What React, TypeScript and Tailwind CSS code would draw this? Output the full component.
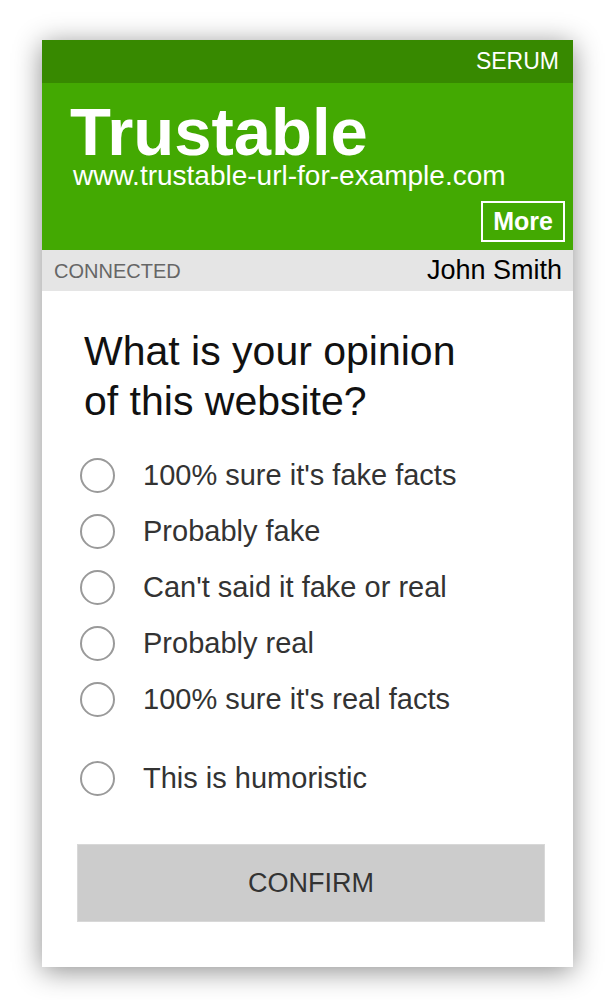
const options = [
  "100% sure it's fake facts",
  'Probably fake',
  "Can't said it fake or real",
  'Probably real',
  "100% sure it's real facts",
];

function Option({ label }: { label: string }) {
  return (
    <div className="flex h-[56px] items-center">
      <span className="ml-[38px] h-[35px] w-[35px] shrink-0 rounded-full border-2 border-[#9a9a9a]" />
      <span className="ml-[28px] text-[29px] leading-none text-[#333]">{label}</span>
    </div>
  );
}

export default function App() {
  const font = { fontFamily: '"Liberation Sans", Arial, Helvetica, sans-serif' };
  return (
    <div className="min-h-[1000px] bg-white pt-[40px]" style={font}>
      <div className="ml-[42px] flex h-[927px] w-[531px] flex-col bg-white shadow-[0_4px_26px_rgba(0,0,0,0.45)]">
        <div className="flex h-[43px] items-center justify-end bg-[#378900] pr-[14px]">
          <span className="text-[23px] leading-none text-white">SERUM</span>
        </div>
        <div className="flex h-[167px] flex-col bg-[#43a902] pl-[28px] pr-[8px] pt-[21px] pb-[8px]">
          <h1 className="h-[56px] text-[67px] font-bold leading-[56px] text-white">Trustable</h1>
          <p className="ml-[3px] mt-[4px] h-[24px] text-[28px] leading-[24px] text-white">www.trustable-url-for-example.com</p>
          <button className="mt-auto flex h-[41px] w-[84px] items-center justify-center self-end border-2 border-white text-[25px] font-bold leading-none text-white">
            More
          </button>
        </div>
        <div className="flex h-[41px] items-center justify-between bg-[#e5e5e5] pl-[12px] pr-[11px]">
          <span className="text-[20px] leading-none text-[#666]">CONNECTED</span>
          <span className="text-[27px] leading-none text-black">John Smith</span>
        </div>
        <div className="flex flex-col pt-[35px]">
          <h2 className="ml-[42px] text-[41px] leading-[50px] text-[#111]">
            What is your opinion
            <br />
            of this website?
          </h2>
          <div className="mt-[21px] flex flex-col">
            {options.map((o) => (
              <Option key={o} label={o} />
            ))}
            <div className="mt-[23px]">
              <Option label="This is humoristic" />
            </div>
          </div>
          <button className="ml-[35px] mt-[38px] flex h-[78px] w-[468px] items-center justify-center border border-[#d8d8d8] bg-[#cccccc] text-[27px] leading-none text-[#333]">
            CONFIRM
          </button>
        </div>
      </div>
    </div>
  );
}
